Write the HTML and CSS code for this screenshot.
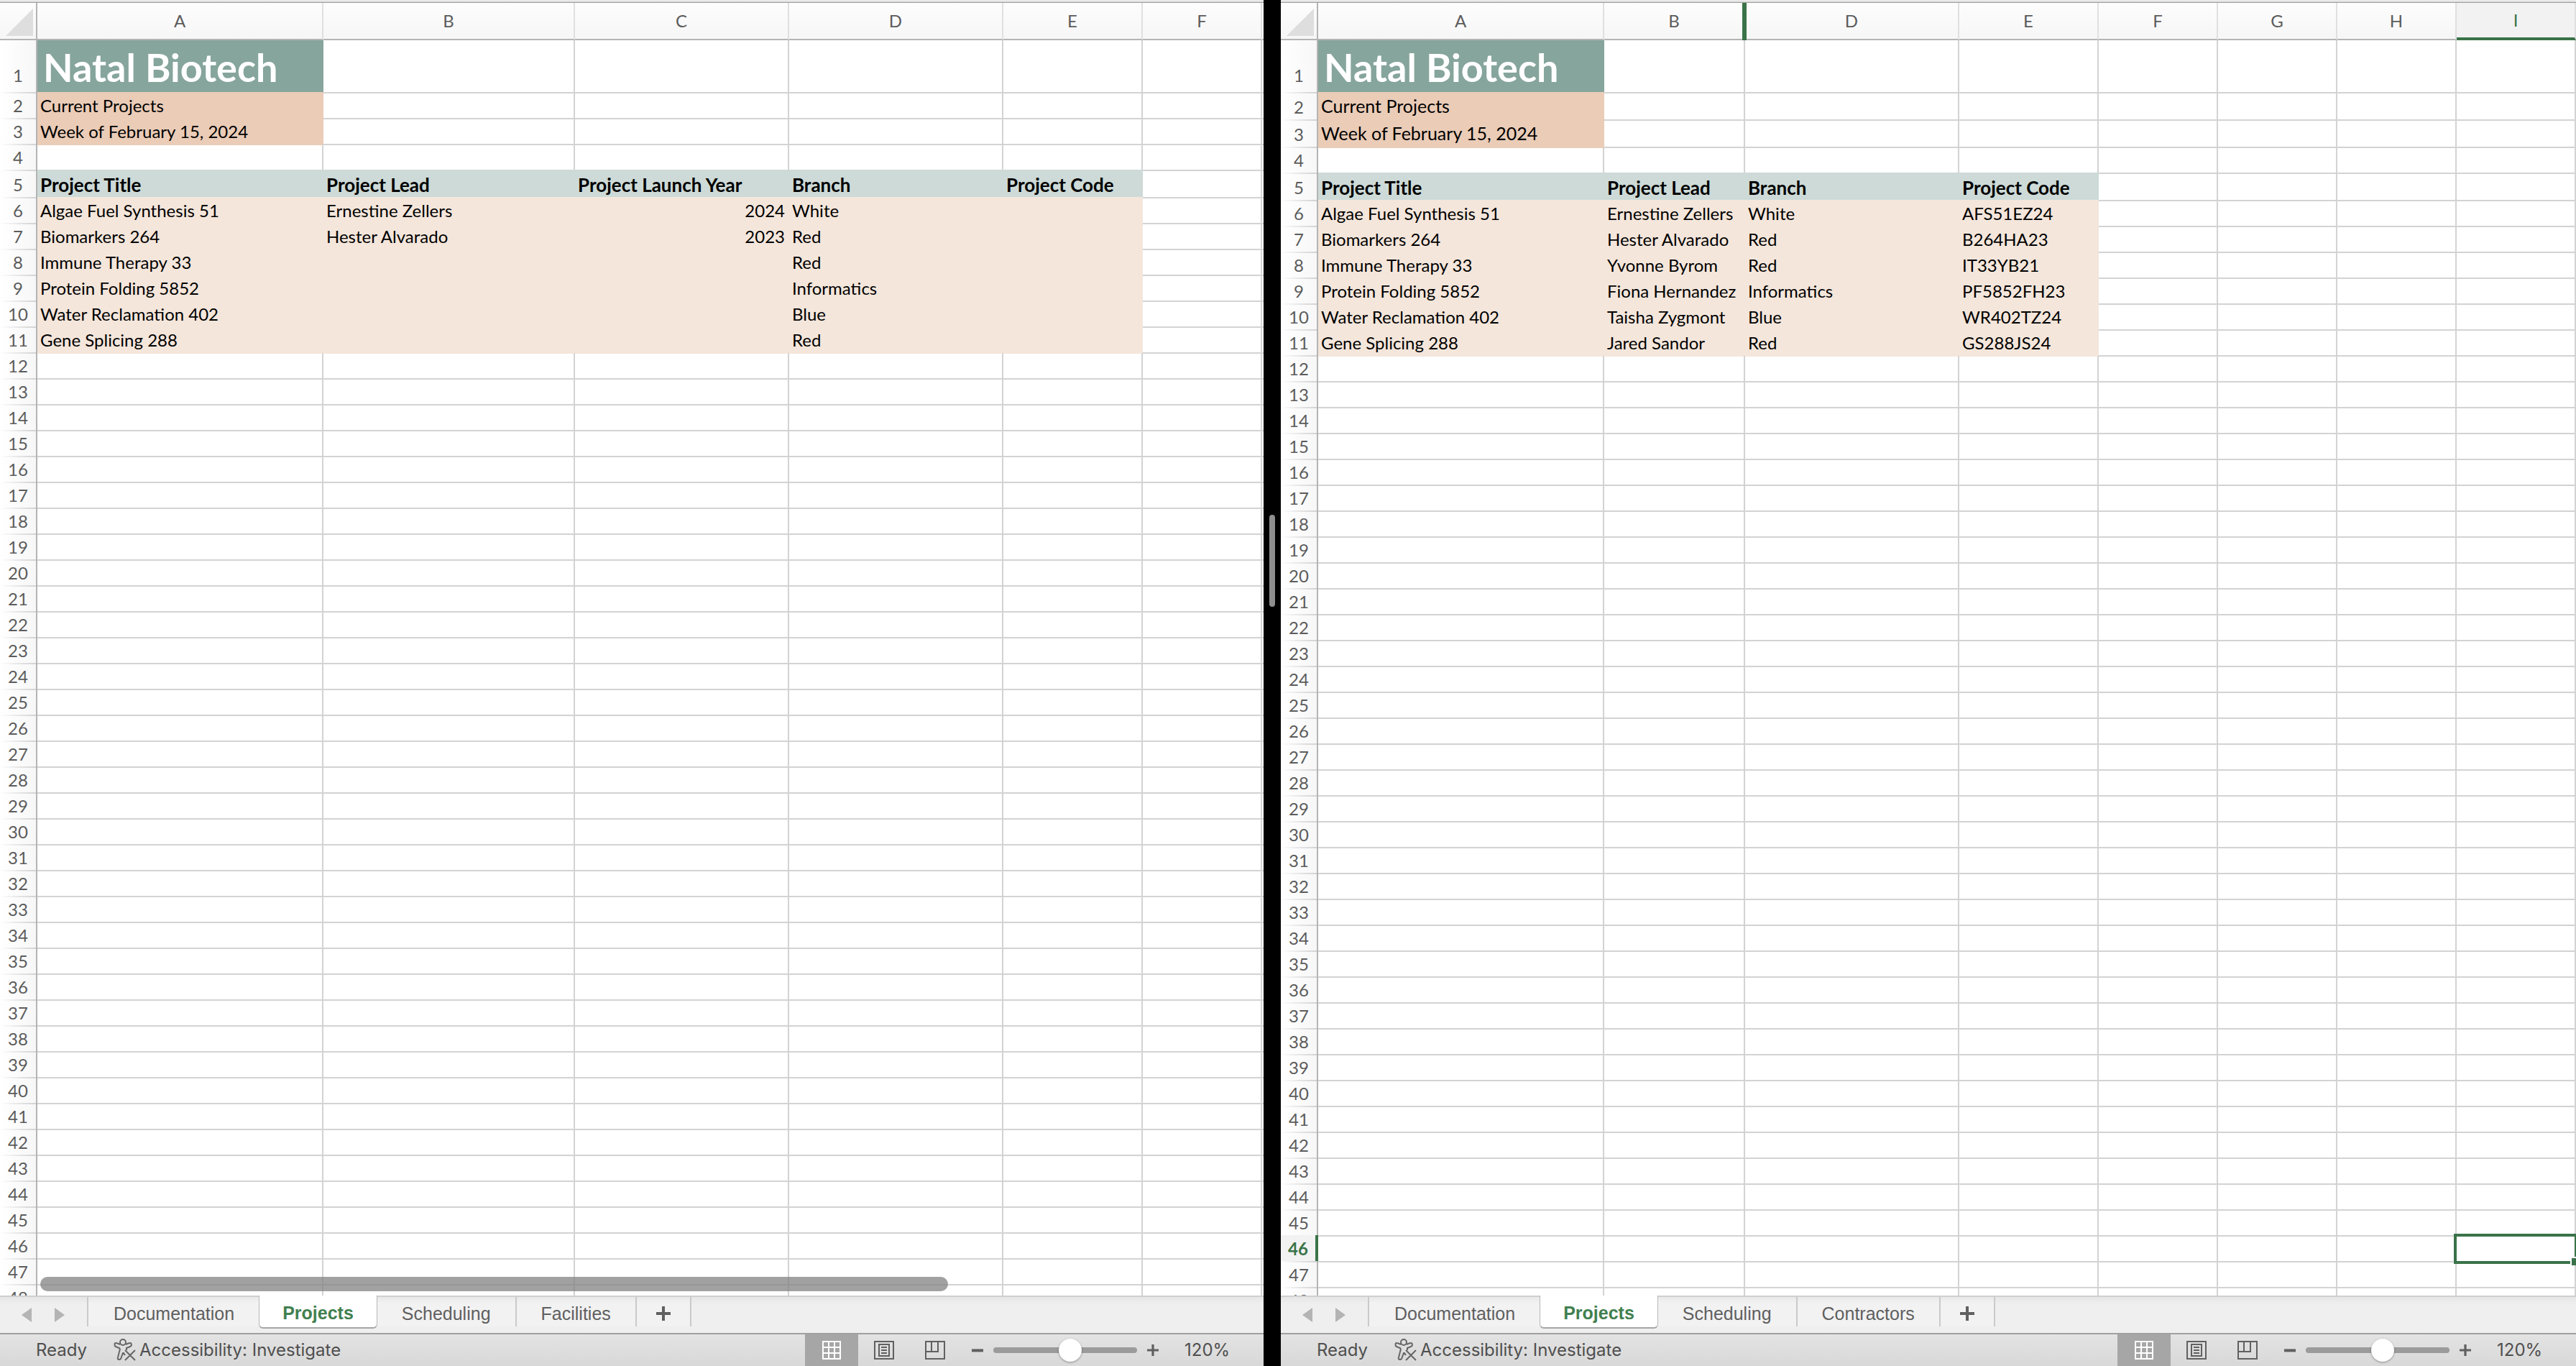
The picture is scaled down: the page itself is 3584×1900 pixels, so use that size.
FILE: index.html
```html
<!DOCTYPE html>
<html lang="en">
<head>
<meta charset="utf-8">
<title>Natal Biotech - Projects</title>
<link rel="stylesheet" href="styles.css">
</head>
<body>
<svg class="sprite" aria-hidden="true">
  <symbol id="i-prev" viewBox="0 0 14 20"><path d="M14 0v20L0 10z"/></symbol>
  <symbol id="i-next" viewBox="0 0 14 20"><path d="M0 0v20l14-10z"/></symbol>
  <symbol id="i-plus" viewBox="0 0 20 20"><path d="M8 0h4v8h8v4h-8v8H8v-8H0V8h8z"/></symbol>
  <symbol id="i-minus" viewBox="0 0 20 20"><path d="M0 8h20v5H0z"/></symbol>
  <symbol id="i-person" viewBox="0 0 32 32"><g fill="none" stroke="currentColor" stroke-width="2"><circle cx="13" cy="5" r="4"/><path d="M9 8C7 7 5 6 3 6s-2 4 0 5l5 2c1 1 1 3 0 5l-2 8c-1 3 2 4 4 2l3-8h1l2 3M17 8c2-1 4-2 6-2s3 4 0 5l-5 2v3M16 16l14 14M30 16L16 30"/></g></symbol>
  <symbol id="i-grid" viewBox="0 0 26 26"><path fill="none" stroke="currentColor" stroke-width="2" d="M1 1h24v24H1zM9 1v24M17 1v24M1 9h24M1 17h24"/></symbol>
  <symbol id="i-page" viewBox="0 0 28 26"><path fill="none" stroke="currentColor" stroke-width="2" d="M1 1h26v24H1zM7 5h14v16H7zM10 9h8M10 13h8M10 17h8"/></symbol>
  <symbol id="i-break" viewBox="0 0 28 26"><path fill="none" stroke="currentColor" stroke-width="2" d="M1 1h26v24H1zM1 15h17V1M9 1v14"/></symbol>
</svg>
<main class="split">
  <section class="pane pane-left" aria-label="Workbook 1">
    <div class="viewport">
      <table class="sheet" id="sheet-left"></table>
      <div class="scroll-track"><div class="scroll-thumb" style="width:74.2%"></div></div>
    </div>
    <nav class="tabs">
      <div class="tab-nav">
        <button aria-label="Previous sheet"><svg width="14" height="20"><use href="#i-prev"/></svg></button>
        <button aria-label="Next sheet"><svg width="14" height="20"><use href="#i-next"/></svg></button>
      </div>
      <button class="tab before-active">Documentation</button>
      <button class="tab active">Projects</button>
      <button class="tab">Scheduling</button>
      <button class="tab">Facilities</button>
      <button class="tab add" aria-label="New sheet"><svg width="20" height="20"><use href="#i-plus"/></svg></button>
    </nav>
    <footer class="status">
      <span class="ready">Ready</span>
      <button class="access"><svg width="32" height="32"><use href="#i-person"/></svg><span>Accessibility: Investigate</span></button>
      <button class="view on" aria-label="Normal view"><svg width="26" height="26"><use href="#i-grid"/></svg></button>
      <button class="view" aria-label="Page layout"><svg width="28" height="26"><use href="#i-page"/></svg></button>
      <button class="view" aria-label="Page break preview"><svg width="28" height="26"><use href="#i-break"/></svg></button>
      <button class="zoom-step" aria-label="Zoom out"><svg width="16" height="16"><use href="#i-minus"/></svg></button>
      <input class="zoom" type="range" min="0" max="100" value="54" aria-label="Zoom">
      <button class="zoom-step" aria-label="Zoom in"><svg width="16" height="16"><use href="#i-plus"/></svg></button>
      <span class="percent">120%</span>
    </footer>
  </section>
  <div class="divider"><span class="grip"></span></div>
  <section class="pane pane-right" aria-label="Workbook 2">
    <div class="viewport">
      <table class="sheet" id="sheet-right"></table>
    </div>
    <nav class="tabs">
      <div class="tab-nav">
        <button aria-label="Previous sheet"><svg width="14" height="20"><use href="#i-prev"/></svg></button>
        <button aria-label="Next sheet"><svg width="14" height="20"><use href="#i-next"/></svg></button>
      </div>
      <button class="tab before-active">Documentation</button>
      <button class="tab active">Projects</button>
      <button class="tab">Scheduling</button>
      <button class="tab">Contractors</button>
      <button class="tab add" aria-label="New sheet"><svg width="20" height="20"><use href="#i-plus"/></svg></button>
    </nav>
    <footer class="status">
      <span class="ready">Ready</span>
      <button class="access"><svg width="32" height="32"><use href="#i-person"/></svg><span>Accessibility: Investigate</span></button>
      <button class="view on" aria-label="Normal view"><svg width="26" height="26"><use href="#i-grid"/></svg></button>
      <button class="view" aria-label="Page layout"><svg width="28" height="26"><use href="#i-page"/></svg></button>
      <button class="view" aria-label="Page break preview"><svg width="28" height="26"><use href="#i-break"/></svg></button>
      <button class="zoom-step" aria-label="Zoom out"><svg width="16" height="16"><use href="#i-minus"/></svg></button>
      <input class="zoom" type="range" min="0" max="100" value="54" aria-label="Zoom">
      <button class="zoom-step" aria-label="Zoom in"><svg width="16" height="16"><use href="#i-plus"/></svg></button>
      <span class="percent">120%</span>
    </footer>
  </section>
</main>
<script src="sheet.js"></script>
</body>
</html>
```
FILE: sheet.js
```js
// Builds each worksheet table from its column list and cell rows.
const ROWS = 48;

const left = {
  columns: [["A", 398], ["B", 350], ["C", 298], ["D", 298], ["E", 194], ["F", 166], ["", 166]],
  filled: 5,
  rows: {
    1: ["Natal Biotech"],
    2: ["Current Projects"],
    3: ["Week of February 15, 2024"],
    5: ["Project Title", "Project Lead", "Project Launch Year", "Branch", "Project Code"],
    6: ["Algae Fuel Synthesis 51", "Ernestine Zellers", 2024, "White"],
    7: ["Biomarkers 264", "Hester Alvarado", 2023, "Red"],
    8: ["Immune Therapy 33", "", "", "Red"],
    9: ["Protein Folding 5852", "", "", "Informatics"],
    10: ["Water Reclamation 402", "", "", "Blue"],
    11: ["Gene Splicing 288", "", "", "Red"]
  }
};

const right = {
  columns: [["A", 398], ["B", 196], ["D", 298], ["E", 194], ["F", 166], ["G", 166], ["H", 166], ["I", 166]],
  filled: 4,
  large: true,
  hiddenAfter: 1,
  selected: { row: 46, column: 7 },
  rows: {
    1: ["Natal Biotech"],
    2: ["Current Projects"],
    3: ["Week of February 15, 2024"],
    5: ["Project Title", "Project Lead", "Branch", "Project Code"],
    6: ["Algae Fuel Synthesis 51", "Ernestine Zellers", "White", "AFS51EZ24"],
    7: ["Biomarkers 264", "Hester Alvarado", "Red", "B264HA23"],
    8: ["Immune Therapy 33", "Yvonne Byrom", "Red", "IT33YB21"],
    9: ["Protein Folding 5852", "Fiona Hernandez", "Informatics", "PF5852FH23"],
    10: ["Water Reclamation 402", "Taisha Zygmont", "Blue", "WR402TZ24"],
    11: ["Gene Splicing 288", "Jared Sandor", "Red", "GS288JS24"]
  }
};

function rowClass(row, sheet) {
  if (row === 1) return "r-title";
  if (row === 5 || (sheet.large && (row === 2 || row === 3))) return "r-tall";
  return "r";
}

function cellClass(row, column, sheet) {
  const names = [];
  if (column === 0) {
    if (row === 1) names.push("title");
    if (row === 2 || row === 3) names.push(sheet.large ? "sub sub-large" : "sub");
    if (row === 4) names.push("under-sub");
  }
  if (column < sheet.filled) {
    if (row === 5) names.push("head");
    if (row > 5 && row < 12) names.push("data");
    if (row === 12) names.push("under-data");
  }
  return names;
}

function build(id, sheet) {
  const pick = sheet.selected || {};
  let html = '<colgroup><col class="c-rows">';
  for (const [, width] of sheet.columns) html += `<col style="width:${width}px">`;
  html += '</colgroup><thead><tr><th class="corner"><svg width="38" height="38" viewBox="0 0 38 38"><path d="M38 0v38H0z"/></svg></th>';
  sheet.columns.forEach(([name], i) => {
    const names = [];
    if (i === pick.column) names.push("picked");
    if (i === sheet.hiddenAfter) names.push("hidden-after");
    html += `<th scope="col" class="${names.join(" ")}">${name}</th>`;
  });
  html += "</tr></thead><tbody>";
  for (let row = 1; row <= ROWS; row++) {
    html += `<tr class="${rowClass(row, sheet)}"><th scope="row"${row === pick.row ? ' class="picked"' : ""}>${row}</th>`;
    sheet.columns.forEach((_, column) => {
      const names = cellClass(row, column, sheet);
      const value = (sheet.rows[row] || [])[column] ?? "";
      if (typeof value === "number") names.push("number");
      const cursor = row === pick.row && column === pick.column;
      if (cursor) names.push("cursor");
      html += `<td class="${names.join(" ")}">${value}${cursor ? '<span class="outline"></span><span class="handle"></span>' : ""}</td>`;
    });
    html += "</tr>";
  }
  document.getElementById(id).innerHTML = html + "</tbody>";
}

build("sheet-left", left);
build("sheet-right", right);
```
FILE: styles.css
```css
* { box-sizing: border-box; }
body { margin: 0; background: #000; }
button { margin: 0; padding: 0; border: 0; background: none; font: inherit; color: inherit; }
svg { display: block; fill: currentColor; }
.sprite { position: absolute; width: 0; height: 0; }

.split { display: flex; height: 100vh; }
.pane { display: flex; flex-direction: column; min-width: 0; overflow: hidden; background: #fff; }
.pane-left { flex: 1758 1 0; }
.pane-right { flex: 1802 1 0; }
.divider { flex: 0 0 24px; display: flex; align-items: center; justify-content: center; background: #000; padding-bottom: 340px; }
.grip { width: 8px; height: 128px; border-radius: 4px; background: #8e8e8e; }

/* worksheet */
.viewport { position: relative; flex: 1; min-height: 0; overflow: hidden; padding-top: 4px; background: linear-gradient(#f0f0f0 1px, #dedede 1px 3px, #9c9c9c 3px 4px, #fff 4px); }
.sheet { width: 0; table-layout: fixed; border-collapse: separate; border-spacing: 0; font: 24px/28px Lato, Carlito, "Open Sans", sans-serif; color: #000; }
.c-rows { width: 52px; }
.sheet th { font-weight: 400; color: #5c5c5c; padding: 0; white-space: nowrap; }
.sheet thead th { height: 52px; border-right: 2px solid #e0e0e0; border-bottom: 2px solid #b4b4b4; background: linear-gradient(#fdfdfd, #f6f6f6); }
.sheet thead .corner { border-right-color: #b4b4b4; padding: 4px 4px 0 8px; color: #dedede; }
.sheet thead .picked { border-bottom: 4px solid #3a7349; background: #f2f2f2; color: #3a7349; }
.sheet .hidden-after { position: relative; }
.hidden-after::after { content: ""; position: absolute; z-index: 1; top: 0; right: -4px; bottom: -2px; width: 6px; background: #3a7349; }
.sheet tbody th { border-right: 2px solid #b4b4b4; vertical-align: bottom; padding-bottom: 3px; background: linear-gradient(90deg, transparent, #d3d3d3) top / 100% 2px no-repeat, linear-gradient(90deg, #fff, #f7f7f7); }
.sheet .r-title th { padding-bottom: 9px; background: linear-gradient(90deg, #fff, #f7f7f7); }
.sheet tbody .picked { border-right: 4px solid #3a7349; color: #3a7349; font-weight: 700; background: #f2f2f2; }
.sheet td { padding: 0 4px 3px; border-top: 2px solid #d3d3d3; border-right: 2px solid #d3d3d3; vertical-align: bottom; white-space: nowrap; }
.r-title { height: 72px; }
.r-tall { height: 38px; }
.r { height: 36px; }
.sheet .r-title td { border-top: 0; }
.sheet .title { padding: 0 8px 4px; font-size: 54px; line-height: 60px; font-weight: 700; color: #fff; background: #86a59c; border-color: #86a59c; }
.sheet .sub { background: #eaccb7; border-color: #eaccb7; }
.sheet .sub-large { font-size: 25px; padding-bottom: 5px; }
.sheet .under-sub { border-top-color: #eaccb7; }
.sheet .head { font-size: 26px; font-weight: 700; background: #cddad7; border-color: #cddad7; }
.sheet .data { background: #f4e6db; border-color: #f4e6db; }
.sheet .under-data { border-top-color: #f4e6db; }
.sheet .number { text-align: right; }
.sheet .cursor { position: relative; }
.outline { position: absolute; inset: -4px -2px -4px -4px; border: 4px solid #3a7349; border-right-width: 2px; }
.handle { position: absolute; right: -2px; bottom: -6px; width: 8px; height: 12px; background: #3a7349; border: 2px solid #fff; border-width: 2px 0 0 2px; }

.scroll-track { position: absolute; left: 56px; right: 0; bottom: 6px; height: 20px; }
.scroll-thumb { height: 20px; border-radius: 10px; background: rgba(128, 128, 128, .74); }

/* sheet tabs */
.tabs { display: flex; align-items: flex-start; height: 54px; border-top: 2px solid #cfcfcf; border-bottom: 2px solid #a0a0a0; background: linear-gradient(#e6e6e6, #efefef 10px); font: 25px/30px "Liberation Sans", Arial, sans-serif; color: #606060; }
.tab-nav { display: flex; align-items: center; gap: 32px; width: 123px; height: 41px; padding: 9px 0 0 30px; border-right: 2px solid #cacaca; color: #b4b4b4; }
.tab { height: 41px; padding: 8px 34px 3px; border-right: 2px solid #cacaca; background: linear-gradient(#e8e8e8, #f2f2f2 8px); }
.before-active { border-right: 0; padding-left: 35px; }
.tab.active { height: 46px; margin-top: -2px; padding: 4px 32px 0; border: 1px solid #b8b8b8; border-top: 0; border-bottom: 2px solid #a6a6a6; border-radius: 0 0 6px 6px; background: #fff; font-weight: 700; color: #41804f; }
.tab.add { padding: 5px 27px 0; }

/* status bar */
.status { display: flex; align-items: center; height: 44px; padding-left: 50px; background: linear-gradient(#e3e3e3, #d8d8d8); font: 24px/28px Inter, "Open Sans", sans-serif; color: #4f4f4f; }
.ready { width: 108px; }
.access { display: flex; align-items: center; gap: 4px; margin-right: auto; }
.access svg { color: #666; }
.view { display: flex; align-items: center; justify-content: center; width: 71px; height: 44px; color: #606060; }
.view.on { width: 74px; background: #a6a6a6; color: #fff; }
.zoom-step { color: #606060; }
.view + .zoom-step { margin-left: 16px; }
.zoom { appearance: none; width: 200px; height: 32px; margin: 0 14px; background: none; }
.zoom::-webkit-slider-runnable-track { height: 8px; border-radius: 4px; background: #9b9b9b; }
.zoom::-webkit-slider-thumb { appearance: none; width: 32px; height: 32px; margin-top: -12px; border-radius: 50%; background: #fff; box-shadow: 0 1px 3px rgba(0, 0, 0, .35); }
.percent { width: 146px; padding-left: 36px; }
```
